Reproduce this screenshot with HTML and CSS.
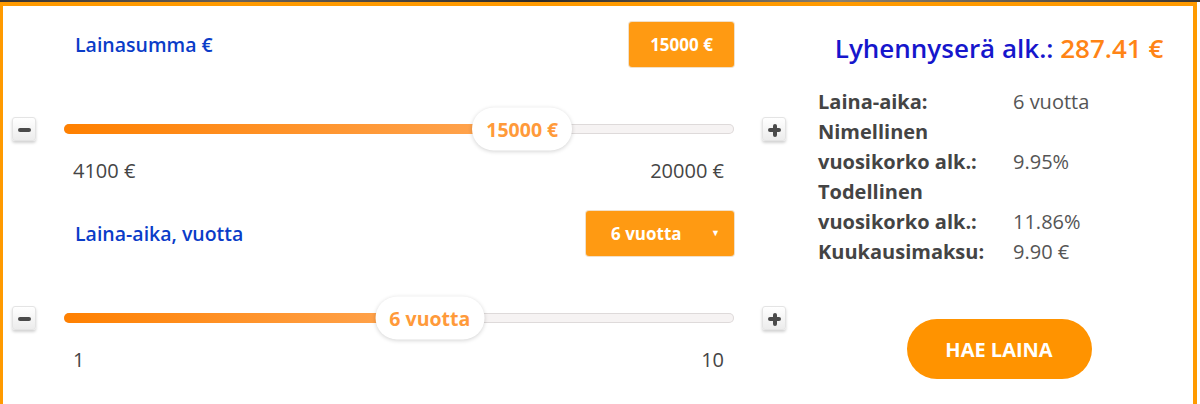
FILE: index.html
```html
<!DOCTYPE html>
<html lang="fi">
<head>
<meta charset="utf-8">
<link rel="stylesheet" href="styles.css">
</head>
<body>
<div class="topstrip"></div>
<div class="calc">
  <div class="left">
    <section class="group">
      <div class="head">
        <span class="label">Lainasumma €</span>
        <span class="valuebox">15000 €</span>
      </div>
      <div class="slider">
        <button class="step"><span class="minus"></span></button>
        <div class="track">
          <div class="fill" style="width: 68%"></div>
          <div class="thumb" style="left: 68.4%">15000 €</div>
        </div>
        <button class="step"><span class="plus"></span></button>
      </div>
      <div class="range"><span>4100 €</span><span>20000 €</span></div>
    </section>
    <section class="group">
      <div class="head">
        <span class="label">Laina-aika, vuotta</span>
        <span class="select">6 vuotta<span class="caret">▼</span></span>
      </div>
      <div class="slider">
        <button class="step"><span class="minus"></span></button>
        <div class="track">
          <div class="fill" style="width: 54%"></div>
          <div class="thumb" style="left: 54.6%">6 vuotta</div>
        </div>
        <button class="step"><span class="plus"></span></button>
      </div>
      <div class="range"><span>1</span><span>10</span></div>
    </section>
  </div>
  <div class="right">
    <div class="title"><span class="t-blue">Lyhennyserä alk.:</span> <span class="t-orange">287.41 €</span></div>
    <div class="facts">
      <div class="k">Laina-aika:</div><div class="v">6 vuotta</div>
      <div class="k">Nimellinen<br>vuosikorko alk.:</div><div class="v end">9.95%</div>
      <div class="k">Todellinen<br>vuosikorko alk.:</div><div class="v end">11.86%</div>
      <div class="k">Kuukausimaksu:</div><div class="v">9.90 €</div>
    </div>
    <div class="cta"><button class="apply">HAE LAINA</button></div>
  </div>
</div>
</body>
</html>
```
FILE: styles.css
```css
html, body {
  margin: 0;
  padding: 0;
  background: #ffffff;
  width: 1200px;
  height: 404px;
  overflow: hidden;
  font-family: "Open Sans", "Liberation Sans", sans-serif;
}
.topstrip {
  height: 2px;
  background: linear-gradient(90deg, #3a3430, #6b6258 20%, #2e2a26 45%, #8a8070 70%, #3b3632);
}
.calc {
  width: 1197px;
  box-sizing: border-box;
  height: 402px;
  border: 4px solid #ff9a00;
  border-left-width: 3px;
  border-bottom: none;
  display: grid;
  grid-template-columns: 774px 362px;
  column-gap: 32px;
  padding: 16px 0 0 9px;
}
.group {
  display: flex;
  flex-direction: column;
  margin-bottom: 29px;
}
.head {
  display: flex;
  align-items: center;
  justify-content: space-between;
  height: 45px;
  padding: 0 52px 0 63px;
  margin-bottom: 40px;
}
.label {
  color: #0a3cc8;
  font-weight: 600;
  font-size: 19.5px;
}
.valuebox, .select {
  background: #ff9a12;
  color: #ffffff;
  font-weight: 700;
  font-size: 17px;
  height: 45px;
  border-radius: 3px;
  display: flex;
  align-items: center;
  justify-content: center;
  box-shadow: 0 0 0 1px rgba(200,130,40,0.25);
}
.valuebox { width: 105px; }
.select {
  width: 148px;
  font-size: 17px;
  position: relative;
  justify-content: flex-start;
  padding-left: 25px;
  box-sizing: border-box;
}
.caret {
  position: absolute;
  right: 14px;
  top: 15px;
  font-size: 9px;
}
.slider {
  display: flex;
  align-items: center;
  height: 44px;
  gap: 28px;
}
.step {
  width: 24px;
  height: 24px;
  padding: 0;
  border: 1px solid #e4e4e4;
  border-radius: 3px;
  background: linear-gradient(#ffffff, #ececec);
  box-shadow: 0 2px 3px rgba(0,0,0,0.18);
  position: relative;
  flex: none;
}
.minus, .plus {
  position: absolute;
  left: 5px;
  top: 10px;
  width: 13px;
  height: 4px;
  border-radius: 2px;
  background: #4a4a4a;
}
.plus::after {
  content: "";
  position: absolute;
  left: 4.5px;
  top: -4.5px;
  width: 4px;
  height: 13px;
  border-radius: 2px;
  background: #4a4a4a;
}
.track {
  flex: 1;
  height: 10px;
  border-radius: 5px;
  background: #f6f3f3;
  box-shadow: inset 0 0 0 1px #dedada;
  position: relative;
}
.fill {
  height: 10px;
  border-radius: 5px 0 0 5px;
  background: linear-gradient(90deg, #ff8000, #ffa654);
}
.thumb {
  position: absolute;
  top: 50%;
  transform: translate(-50%, -50%);
  height: 43px;
  padding: 0 14px;
  border-radius: 22px;
  background: #ffffff;
  box-shadow: 0 1px 4px rgba(0,0,0,0.18);
  color: #ff9a3a;
  font-weight: 700;
  font-size: 19.5px;
  display: flex;
  align-items: center;
  white-space: nowrap;
}
.range {
  display: flex;
  justify-content: space-between;
  margin-top: 9px;
  padding: 0 62px 0 61px;
  line-height: 22px;
  color: #454545;
  font-size: 20px;
}
.right {
  display: flex;
  flex-direction: column;
}
.title {
  text-align: center;
  font-size: 26px;
  font-weight: 600;
  line-height: 30px;
  margin-top: 11px;
  white-space: nowrap;
}
.t-blue { color: #1616cc; }
.t-orange { color: #ff8416; }
.facts {
  display: grid;
  grid-template-columns: 195px 1fr;
  margin-top: 24px;
  line-height: 30px;
  font-size: 20px;
}
.k {
  color: #444444;
  font-weight: 700;
  white-space: nowrap;
}
.v {
  color: #555555;
}
.v.end {
  align-self: end;
}
.cta {
  display: flex;
  justify-content: center;
  margin-top: 52px;
}
.apply {
  width: 185px;
  height: 60px;
  border: none;
  border-radius: 30px;
  background: #ff9300;
  color: #ffffff;
  font-family: "Open Sans", "Liberation Sans", sans-serif;
  font-weight: 700;
  font-size: 20px;
}
```
